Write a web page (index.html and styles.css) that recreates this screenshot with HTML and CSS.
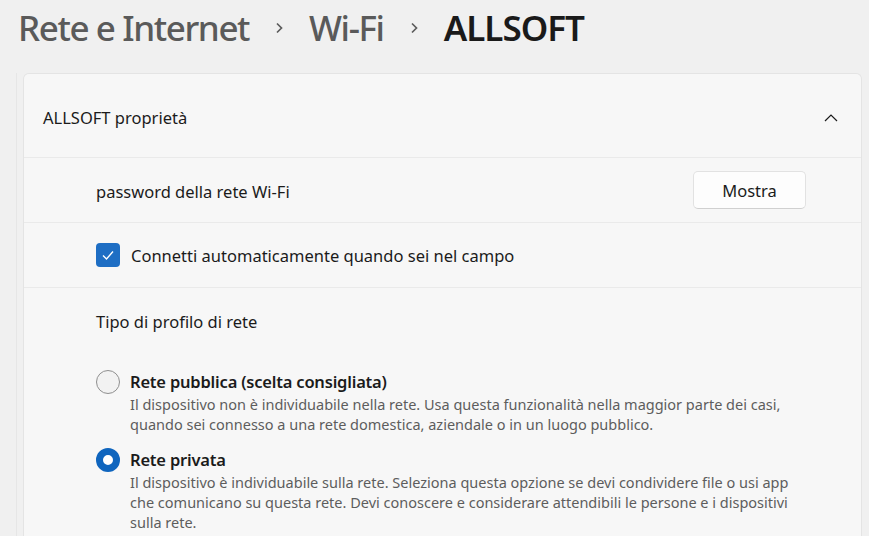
FILE: index.html
```html
<!DOCTYPE html>
<html lang="it">
<head>
    <meta charset="UTF-8">
    <title>Wi-Fi - ALLSOFT</title>
    <link rel="stylesheet" href="styles.css">
</head>
<body>
    <!-- Percorso -->
    <div class="breadcrumb">
        <span class="crumb">Rete e Internet</span>
        <svg class="sep" width="10" height="14" viewBox="0 0 10 14"><path d="M3 2.5 L7.5 7 L3 11.5" fill="none" stroke="#5c5c5c" stroke-width="1.7"/></svg>
        <span class="crumb">Wi-Fi</span>
        <svg class="sep" width="10" height="14" viewBox="0 0 10 14"><path d="M3 2.5 L7.5 7 L3 11.5" fill="none" stroke="#5c5c5c" stroke-width="1.7"/></svg>
        <span class="crumb current">ALLSOFT</span>
    </div>

    <div class="panel">
        <div class="card">
            <!-- Intestazione -->
            <div class="row header">
                <span class="header-title">ALLSOFT proprietà</span>
                <svg class="chevron" width="16" height="10" viewBox="0 0 16 10"><path d="M2 8 L8 2 L14 8" fill="none" stroke="#1b1b1b" stroke-width="1.2"/></svg>
            </div>

            <div class="row password">
                <span>password della rete Wi-Fi</span>
                <button class="btn">Mostra</button>
            </div>

            <div class="row auto">
                <span class="checkbox">
                    <svg width="14" height="12" viewBox="0 0 14 12"><path d="M2 6.5 L5.5 10 L12 2.5" fill="none" stroke="#fff" stroke-width="1.4"/></svg>
                </span>
                <span>Connetti automaticamente quando sei nel campo</span>
            </div>

            <div class="row profile">
                <div class="profile-title">Tipo di profilo di rete</div>

                <div class="option">
                    <span class="radio"></span>
                    <div class="option-text">
                        <div class="option-name">Rete pubblica (scelta consigliata)</div>
                        <div class="option-desc">Il dispositivo non è individuabile nella rete. Usa questa funzionalità nella maggior parte dei casi, quando sei connesso a una rete domestica, aziendale o in un luogo pubblico.</div>
                    </div>
                </div>

                <div class="option">
                    <span class="radio checked"></span>
                    <div class="option-text">
                        <div class="option-name">Rete privata</div>
                        <div class="option-desc">Il dispositivo è individuabile sulla rete. Seleziona questa opzione se devi condividere file o usi app che comunicano su questa rete. Devi conoscere e considerare attendibili le persone e i dispositivi sulla rete.</div>
                    </div>
                </div>
            </div>
        </div>
    </div>
</body>
</html>
```

FILE: styles.css
```css
/* Generale */
body {
    margin: 0;
    background-color: #f0f0f0;
    font-family: "Noto Sans", "Open Sans", sans-serif;
    color: #1b1b1b;
    overflow: hidden;
}

/* Percorso */
.breadcrumb {
    display: flex;
    align-items: center;
    height: 55px;
    padding-left: 18px;
    gap: 25px;
}

.crumb {
    font-size: 35px;
    font-weight: 500;
    color: #5a5a5a;
    letter-spacing: -1.4px;
}

.crumb.current {
    color: #1a1a1a;
    font-weight: 600;
    letter-spacing: -1px;
}

.sep {
    margin-top: 1px;
}

/* Pannello */
.panel {
    margin: 18px 0 0 16px;
    border-left: 1px solid #e6e6e6;
    padding-left: 6px;
    width: 839px;
}

.card {
    background-color: #eaeaea;
    border: 1px solid #e4e4e4;
    border-bottom: none;
    border-radius: 6px 6px 0 0;
    display: flex;
    flex-direction: column;
    gap: 1px;
    overflow: hidden;
}

.row {
    background-color: #f7f7f7;
    display: flex;
    align-items: center;
    font-size: 16.5px;
}

.header {
    height: 83px;
    padding: 4px 22px 0 19px;
    box-sizing: border-box;
    justify-content: space-between;
}

.header-title {
    font-size: 16.5px;
}

.password {
    height: 64px;
    padding: 2px 55px 0 72px;
    box-sizing: border-box;
    justify-content: space-between;
}

.btn {
    width: 113px;
    height: 38px;
    margin-top: -2px;
    background-color: #fdfdfd;
    border: 1px solid #e2e2e2;
    border-bottom-color: #d0d0d0;
    border-radius: 5px;
    font-family: inherit;
    font-size: 16.5px;
    color: #1b1b1b;
}

.auto {
    height: 64px;
    padding-left: 72px;
    gap: 11px;
}

.checkbox {
    width: 24px;
    height: 24px;
    border-radius: 4px;
    background-color: #1e6ec4;
    display: flex;
    align-items: center;
    justify-content: center;
}

/* Profilo */
.profile {
    flex-direction: column;
    align-items: stretch;
    padding: 22px 60px 0 72px;
    height: 250px;
}

.profile-title {
    margin-bottom: 36px;
}

.option {
    display: flex;
    gap: 10px;
    margin-bottom: 13px;
}

.radio {
    flex: none;
    box-sizing: border-box;
    width: 24px;
    height: 24px;
    border-radius: 50%;
    border: 1.5px solid #8f8f8f;
    background-color: #f2f2f2;
    margin-top: 1px;
}

.radio.checked {
    border: 7px solid #0f65be;
    background-color: #fff;
}

.option-name {
    font-size: 16.5px;
    font-weight: 600;
    line-height: 24px;
    letter-spacing: -0.2px;
    margin-top: 1px;
}

.option-desc {
    font-size: 14.5px;
    line-height: 20px;
    color: #5d5d5d;
}
```
